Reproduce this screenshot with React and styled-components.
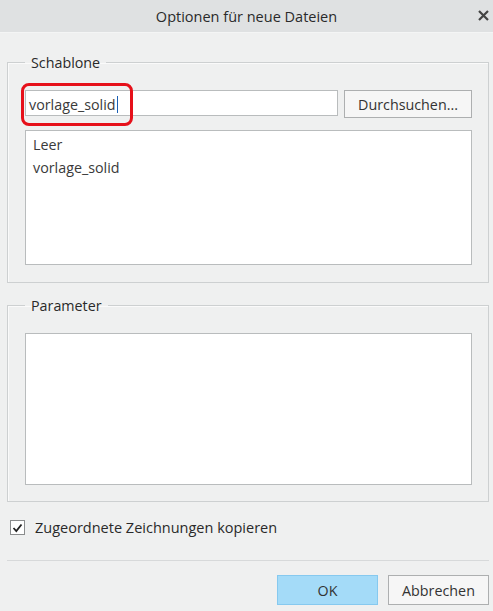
import styled, {createGlobalStyle} from 'styled-components'

const GlobalStyle = createGlobalStyle`
    html, body {
        margin: 0;
        padding: 0;
        background: #eff0f0;
    }
    body {
        font-family: "Open Sans", "Noto Sans", sans-serif;
        color: #333;
    }
`

const Window = styled.div`
    width: 493px;
    height: 611px;
    display: flex;
    flex-direction: column;
    background: #eff0f0;
    overflow: hidden;
`

const TitleBar = styled.header`
    height: 32px;
    display: flex;
    align-items: center;
    justify-content: center;
    position: relative;
    background: #dfe1e2;
    border-bottom: 1px solid #f4f5f5;
    font-size: 14.5px;
    color: #2a2a2a;
`

const CloseButton = styled.span`
    position: absolute;
    right: 2px;
    top: 7px;
    width: 16px;
    height: 16px;
    display: flex;
    align-items: center;
    justify-content: center;
`

const Body = styled.div`
    flex: 1;
    display: flex;
    flex-direction: column;
    padding: 20px 4px 0 7px;
`

const GroupBox = styled.fieldset`
    margin: 0 0 ${p => p.gap || 0}px 0;
    padding: ${p => p.top || 0}px 16px ${p => p.bottom || 16}px 17px;
    border: 1px solid #cdd0d1;
    box-shadow: inset 1px 1px 0 #fafafa;
    display: flex;
    flex-direction: column;
    min-width: 0;
`

const Legend = styled.legend`
    margin-left: 0;
    padding: 0 6px;
    font-size: 14.3px;
    color: #2a2a2a;
    line-height: 19px;
`

const Row = styled.div`
    display: flex;
    gap: 6px;
    position: relative;
`

const TextInput = styled.div`
    flex: 1;
    height: 26px;
    box-sizing: border-box;
    border: 1px solid #b9bcbd;
    background: #fff;
    padding: 3px 3px 0 3px;
    font-size: 14.3px;
    display: flex;
    align-items: center;
    color: #3a3a3a;
`

const Caret = styled.span`
    display: inline-block;
    width: 1px;
    height: 17px;
    margin-left: 1px;
    background: #1a5fb4;
`

const Highlight = styled.div`
    position: absolute;
    left: -4px;
    top: -7px;
    width: 112px;
    height: 43px;
    box-sizing: border-box;
    border: 3.5px solid #e6101a;
    border-radius: 8px;
    pointer-events: none;
`

const Button = styled.button`
    width: ${p => p.width || 101}px;
    height: ${p => p.height || 28}px;
    box-sizing: border-box;
    border: 1px solid ${p => p.primary ? '#86c9ef' : '#adafb0'};
    background: ${p => p.primary ? '#a4dbf8' : '#f6f6f6'};
    font-family: inherit;
    font-size: 14.3px;
    color: #333;
    padding: 0;
`

const ListBox = styled.div`
    height: ${p => p.height}px;
    margin-top: ${p => p.offset || 0}px;
    box-sizing: border-box;
    border: 1px solid #b9bcbd;
    background: #fff;
    padding: 2px 7px;
    font-size: 14.3px;
    color: #3a3a3a;
`

const ListItem = styled.div`
    line-height: 23px;
`

const CheckRow = styled.label`
    display: flex;
    align-items: center;
    gap: 10px;
    margin: 16px 0 0 3px;
    font-size: 14.5px;
    color: #2a2a2a;
`

const CheckBox = styled.span`
    width: 15px;
    height: 15px;
    box-sizing: border-box;
    border: 1px solid #8a8c8d;
    background: #fff;
    display: flex;
    align-items: center;
    justify-content: center;
`

const Footer = styled.footer`
    margin-top: 23px;
    border-top: 1px solid #d7d9da;
    display: flex;
    justify-content: flex-end;
    gap: 10px;
    padding: 14px 0 0 0;
`

const App = () => {
    return (
        <Window>
            <GlobalStyle />
            <TitleBar>
                Optionen für neue Dateien
                <CloseButton>
                    <svg width="11" height="11" viewBox="0 0 11 11">
                        <path d="M1 1 L10 10 M10 1 L1 10" stroke="#444" strokeWidth="2.2" />
                    </svg>
                </CloseButton>
            </TitleBar>
            <Body>
                <GroupBox top={18} bottom={17} gap={13}>
                    <Legend>Schablone</Legend>
                    <Row>
                        <TextInput>vorlage_solid<Caret /></TextInput>
                        <Button width={128}>Durchsuchen...</Button>
                        <Highlight />
                    </Row>
                    <ListBox height={135} offset={12}>
                        <ListItem>Leer</ListItem>
                        <ListItem>vorlage_solid</ListItem>
                    </ListBox>
                </GroupBox>
                <GroupBox top={18}>
                    <Legend>Parameter</Legend>
                    <ListBox height={152} />
                </GroupBox>
                <CheckRow>
                    <CheckBox>
                        <svg width="11" height="10" viewBox="0 0 11 10">
                            <path d="M1.5 5 L4.3 8 L9.5 1.5" stroke="#222" strokeWidth="1.8" fill="none" />
                        </svg>
                    </CheckBox>
                    Zugeordnete Zeichnungen kopieren
                </CheckRow>
                <Footer>
                    <Button primary height={30}>OK</Button>
                    <Button height={30}>Abbrechen</Button>
                </Footer>
            </Body>
        </Window>
    )
}

export default App
